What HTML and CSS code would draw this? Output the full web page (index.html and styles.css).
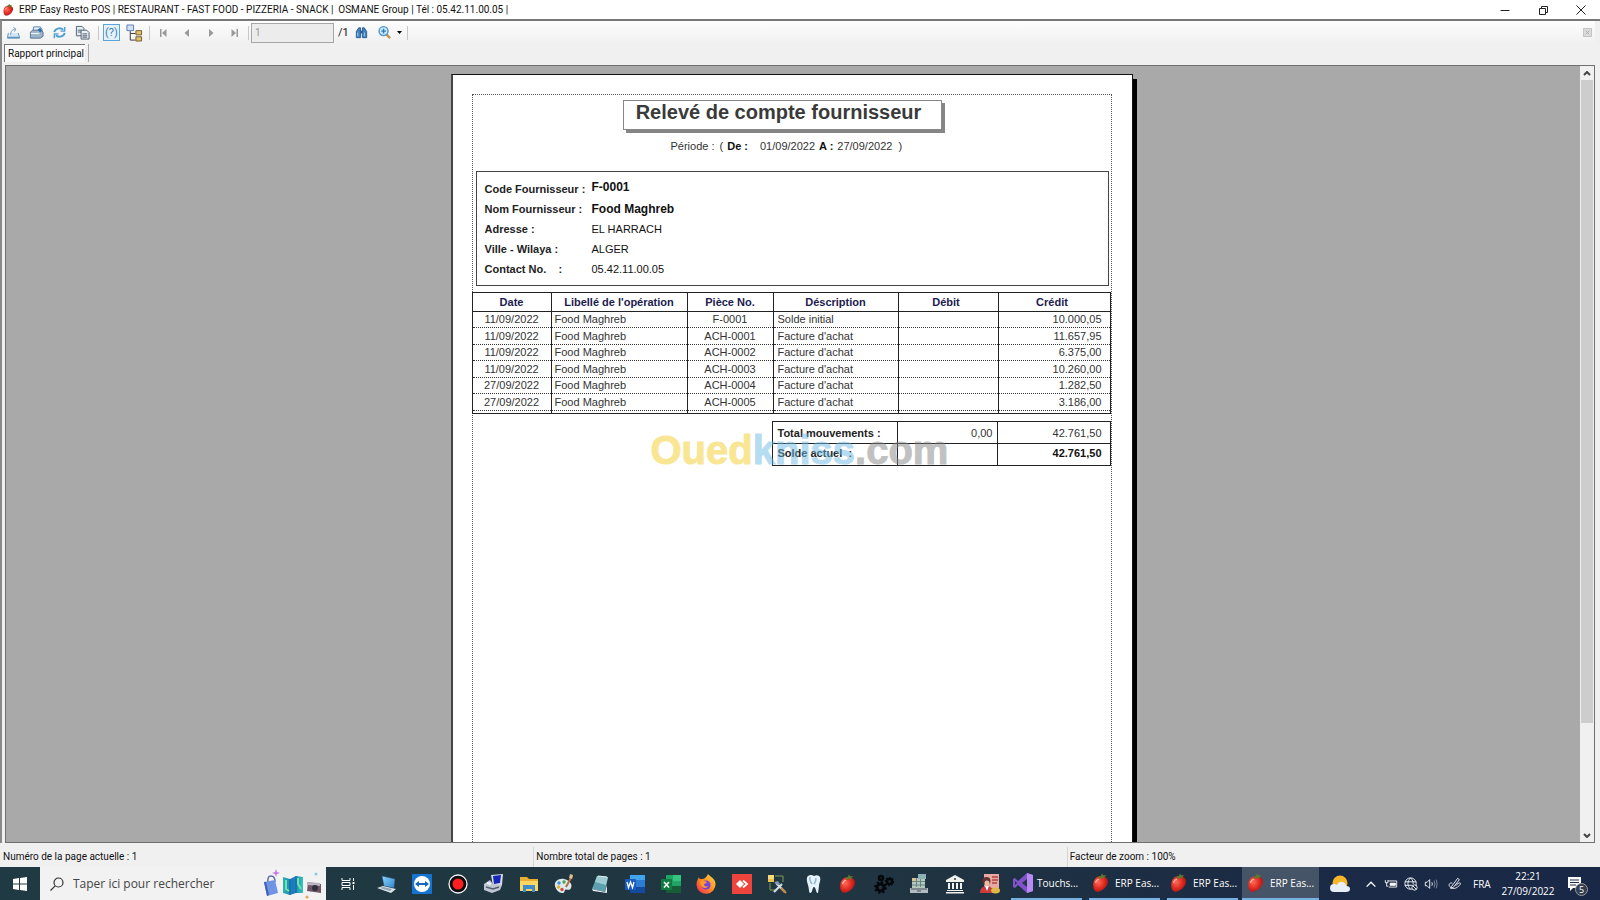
FILE: index.html
```html
<!DOCTYPE html>
<html lang="fr">
<head>
<meta charset="utf-8">
<title>ERP Easy Resto POS</title>
<link rel="stylesheet" href="styles.css">
</head>
<body>
<svg class="defs" aria-hidden="true">
  <defs>
    <radialGradient id="redFruit" cx=".35" cy=".4" r=".8"><stop offset="0" stop-color="#ff6a55"/><stop offset=".5" stop-color="#df2a22"/><stop offset="1" stop-color="#8c0d10"/></radialGradient>
    <linearGradient id="fox" x1="1" y1="0" x2="0" y2="1"><stop offset="0" stop-color="#ffe14a"/><stop offset=".5" stop-color="#ff8a1f"/><stop offset="1" stop-color="#f0245c"/></linearGradient>
    <linearGradient id="screen" x1="0" y1="0" x2="1" y2="1"><stop offset="0" stop-color="#8fd3fb"/><stop offset="1" stop-color="#2c86cf"/></linearGradient>
    <linearGradient id="mapg" x1="0" y1="0" x2="1" y2="0"><stop offset="0" stop-color="#2bb5a8"/><stop offset=".5" stop-color="#1a76c4"/><stop offset="1" stop-color="#35c7b0"/></linearGradient>
    <symbol id="berry" viewBox="0 0 22 22">
      <path d="M6 5C10 2 17 3 18.500 7.500C20 12 15 19 8.500 20.500C4 21.500 2 17 2.500 12C2.800 9 3.500 7 6 5Z" fill="url(#redFruit)"/>
      <path d="M8 4.500L11 3L12 .500L13.500 2.500L17 2.500L14.500 4.500L15 6.500L12 5L9.500 6.500Z" fill="#5d7a2c"/>
      <path d="M5 11q1-4 4-4" stroke="#ffb0a0" stroke-width="1.500" fill="none"/>
    </symbol>
  </defs>
</svg>

<main class="window">
  <header class="titlebar">
    <svg class="app-icon"><use href="#berry"/></svg>
    <h1 class="caption">ERP Easy Resto POS | RESTAURANT - FAST FOOD - PIZZERIA - SNACK |&nbsp; OSMANE Group | Tél : 05.42.11.00.05 |</h1>
    <div class="win-buttons">
      <button aria-label="Réduire"><svg viewBox="0 0 10 10"><path d="M.500 5.500h9"/></svg></button>
      <button aria-label="Restaurer"><svg viewBox="0 0 10 10"><path d="M1.500 3.500h6v6h-6zM3.500 3V1.500h6v6H8"/></svg></button>
      <button aria-label="Fermer"><svg viewBox="0 0 10 10"><path d="M.500 .500l9 9M9.500 .500l-9 9"/></svg></button>
    </div>
  </header>

  <div class="client">
    <div class="toolbar">
      <button aria-label="Exporter"><svg viewBox="0 0 16 16" fill="none" stroke="#5d93bd"><path d="M2.500 8.500L1.500 13.500H14.500L13 8.500" fill="#d3e6f4"/><path d="M1.500 13.500h13" stroke-width="2"/><path d="M5 10.500C5 6 7 5 10 4.500M8 2.500L10.500 4.500L9 7"/></svg></button>
      <button aria-label="Imprimer"><svg viewBox="0 0 16 16"><path d="M5 2h7l2 3v4H4z" fill="#e8f2fb" stroke="#5b7fa3"/><path d="M1.500 7.500L4 5.500h9l2 2v4.500l-3 2H1.500z" fill="#9db4cc" stroke="#56728f"/><path d="M2 9h9" stroke="#fff"/><path d="M9 5l3-2 2 3-2 2z" fill="#2f6ea8"/></svg></button>
      <button aria-label="Actualiser"><svg viewBox="0 0 16 16" fill="none" stroke="#4f9fd0" stroke-width="2"><path d="M2.500 7.500A5.500 4.500 0 0 1 12 5M13.500 8.500A5.500 4.500 0 0 1 4 11"/><path d="M13.500 2v4.500H9M2.500 14V9.500H7" stroke-width="1.500"/></svg></button>
      <button aria-label="Copier"><svg viewBox="0 0 16 16" stroke="#4d5f70" fill="#e9eef3"><path d="M1.500 1.500h6l2 2v8h-8z"/><path d="M3 5.500h4M3 7.500h4"/><path d="M6.500 5.500h6l2.500 2.500v7H6.500z"/><path d="M8 9.500h5M8 11.500h5M8 13h5"/></svg></button>
      <i class="sep"></i>
      <button class="toggled" aria-label="Paramètres">(?)</button>
      <button class="wide" aria-label="Arborescence"><svg viewBox="0 0 18 20"><path d="M4.500 8v9.500H10M4.500 10.500H10" fill="none" stroke="#333"/><path d="M1 1.500h7v6H1z" fill="#cfe0f7" stroke="#5c7bb0"/><path d="M10.500 7.500h6v4.500h-6zM10.500 14h6v4.500h-6z" fill="#e5c06c" stroke="#6f5a2c"/></svg></button>
      <i class="sep tight"></i>
      <button class="nav" aria-label="Première page"><svg viewBox="0 0 8 8"><path d="M1 0h1.500v8H1zM7.500 0v8L3 4z"/></svg></button>
      <button class="nav" aria-label="Page précédente"><svg viewBox="0 0 8 8"><path d="M6 0v8L1.500 4z"/></svg></button>
      <button class="nav" aria-label="Page suivante"><svg viewBox="0 0 8 8"><path d="M2 0v8l4.500-4z"/></svg></button>
      <button class="nav" aria-label="Dernière page"><svg viewBox="0 0 8 8"><path d="M.500 0v8L5 4zM5.500 0H7v8H5.500z"/></svg></button>
      <i class="sep tight"></i>
      <input class="page-input" type="text" value="1" aria-label="Page" disabled>
      <span class="page-count">/1</span>
      <button aria-label="Rechercher"><svg viewBox="0 0 16 16"><path d="M2.500 13.500V7L5 3h2v10.500zM9 13.500V3h2L13.500 7v6.500z" fill="#3f82bd" stroke="#2b5f92"/><path d="M7 6h2v3H7z" fill="#2b5f92"/><path d="M4 8v4M11 8v4" stroke="#a7d3f3"/></svg></button>
      <button aria-label="Zoom"><svg viewBox="0 0 16 16"><path d="M9.500 9.500L14 14" stroke="#c2924e" stroke-width="2.500"/><circle cx="7" cy="6.500" r="4.800" fill="#cde8fb" stroke="#4b95cf" stroke-width="1.500"/><path d="M4.500 6.500h5M7 4v5" stroke="#2f79b8" stroke-width="1.500"/></svg></button>
      <button class="caret" aria-label="Options de zoom"><svg viewBox="0 0 5 3"><path d="M0 0h5L2.500 3z"/></svg></button>
      <i class="sep"></i>
      <button class="close-view" aria-label="Fermer la vue"><svg viewBox="0 0 10 10"><path d="M.500 .500h9v9h-9z" fill="#dcdcdc" stroke="#bdbdbd"/><path d="M3 3l4 4M7 3L3 7" stroke="#aaa"/></svg></button>
    </div>

    <div class="tabs"><button class="tab">Rapport principal</button></div>

    <div class="viewer">
      <div class="canvas">
        <article class="paper">
          <div class="margins">
            <h2 class="report-title">Relevé de compte fournisseur</h2>
            <p class="period"><span class="label">Période :</span><span>(</span><b>De :</b><time class="from">01/09/2022</time><b>A :</b><time>27/09/2022</time><span class="end">)</span></p>
            <dl class="supplier">
              <dt>Code Fournisseur :</dt><dd class="strong raised">F-0001</dd>
              <dt>Nom Fournisseur :</dt><dd class="strong">Food Maghreb</dd>
              <dt>Adresse :</dt><dd>EL HARRACH</dd>
              <dt>Ville - Wilaya :</dt><dd>ALGER</dd>
              <dt>Contact No. &nbsp;&nbsp; :</dt><dd>05.42.11.00.05</dd>
            </dl>
            <table class="ledger">
              <colgroup><col class="c-date"><col class="c-label"><col class="c-ref"><col class="c-desc"><col class="c-debit"><col></colgroup>
              <thead><tr><th>Date</th><th>Libellé de l'opération</th><th>Pièce No.</th><th>Déscription</th><th>Débit</th><th>Crédit</th></tr></thead>
              <tbody>
                <tr><td>11/09/2022</td><td>Food Maghreb</td><td>F-0001</td><td>Solde initial</td><td></td><td>10.000,05</td></tr>
                <tr><td>11/09/2022</td><td>Food Maghreb</td><td>ACH-0001</td><td>Facture d'achat</td><td></td><td>11.657,95</td></tr>
                <tr><td>11/09/2022</td><td>Food Maghreb</td><td>ACH-0002</td><td>Facture d'achat</td><td></td><td>6.375,00</td></tr>
                <tr><td>11/09/2022</td><td>Food Maghreb</td><td>ACH-0003</td><td>Facture d'achat</td><td></td><td>10.260,00</td></tr>
                <tr><td>27/09/2022</td><td>Food Maghreb</td><td>ACH-0004</td><td>Facture d'achat</td><td></td><td>1.282,50</td></tr>
                <tr><td>27/09/2022</td><td>Food Maghreb</td><td>ACH-0005</td><td>Facture d'achat</td><td></td><td>3.186,00</td></tr>
              </tbody>
              <tfoot><tr><td></td><td></td><td></td><td></td><td></td><td></td></tr></tfoot>
            </table>
            <div class="summary">
              <table class="totals">
                <colgroup><col class="c-desc"><col class="c-debit"><col></colgroup>
                <tr><th>Total mouvements :</th><td>0,00</td><td>42.761,50</td></tr>
                <tr class="balance"><th>Solde actuel &nbsp;:</th><td></td><td class="strong">42.761,50</td></tr>
              </table>
              <div class="watermark"><span class="y">Oued</span><span class="b">kniss</span><span class="g">.com</span></div>
            </div>
          </div>
        </article>
      </div>
      <div class="scrollbar">
        <button aria-label="Défiler vers le haut"><svg viewBox="0 0 8 5"><path d="M1 4l3-3 3 3"/></svg></button>
        <div class="track"><div class="thumb"></div></div>
        <button aria-label="Défiler vers le bas"><svg viewBox="0 0 8 5"><path d="M1 1l3 3 3-3"/></svg></button>
      </div>
    </div>
  </div>

  <footer class="status">
    <span>Numéro de la page actuelle : 1</span><span>Nombre total de pages : 1</span><span>Facteur de zoom : 100%</span>
  </footer>
</main>

<nav class="taskbar">
  <button class="start" aria-label="Démarrer"><svg viewBox="0 0 14 14" fill="#fff"><path d="M0 2l6-1v5.500H0zM7 .900L14 0v6.500H7zM0 7.500h6V13l-6-1zM7 7.500h7V14l-7-1z"/></svg></button>
  <div class="search">
    <svg class="lens" viewBox="0 0 14 14" fill="none" stroke="#333" stroke-width="1.200"><circle cx="8.500" cy="5.500" r="4.500"/><path d="M5.200 8.800L.500 13.500"/></svg>
    <input type="text" placeholder="Taper ici pour rechercher" aria-label="Taper ici pour rechercher">
    <svg class="doodle" viewBox="0 0 60 32">
      <path d="M13 1l1 3 3 1-3 1-1 3-1-3-3-1 3-1z" fill="#c77be6"/>
      <path d="M5 15Q4 8 8 8t4 6" fill="none" stroke="#5a6ba8" stroke-width="1.500"/>
      <path d="M1 14l11-2 3 13-11 3z" fill="#6f94e6"/><path d="M1 14l3 14 2-1-3-13z" fill="#3e5fba"/>
      <path d="M20 9l7 2 6-3 7 1v16l-7 0-6 2-7-2z" fill="url(#mapg)"/><path d="M27 11v16M33 8v17" stroke="#125f8f" stroke-width="1"/><path d="M23 12v9l3 2M35 10v6l3 5" stroke="#6fe0b0" stroke-width="2" fill="none"/>
      <path d="M45 14l13 2v9l-14-2z" fill="#6b5566"/><path d="M44 14l13 1v3l-13-1z" fill="#b9b3bd"/><circle cx="52" cy="20" r="3" fill="#342e3c"/>
      <circle cx="53" cy="6" r="1.500" fill="#8bc8e8"/><circle cx="44" cy="29" r="1.500" fill="#e9a44e"/>
    </svg>
  </div>
  <div class="pinned">
    <button class="view" aria-label="Vue des tâches"><svg viewBox="0 0 20 20" fill="none" stroke="#fff"><path d="M4 4v2.500h8V4M4 16v-2.500h8V16M4 8.500h8v3H4zM15.500 4v3M15.500 11v5"/><path d="M14.500 8h2v2h-2z" fill="#fff" stroke="none"/></svg></button>
    <button aria-label="Ce PC"><svg viewBox="0 0 20 20"><path d="M5 2l13 3-1 9-10-2z" fill="url(#screen)" stroke="#26506f" stroke-width=".500"/><path d="M0 14l6-2 13 3-5 4z" fill="#dbe3e8"/><path d="M3 14l3-1 9 2-2 2z" fill="#8fa5b3"/></svg></button>
    <button aria-label="TeamViewer"><svg viewBox="0 0 20 20"><rect width="20" height="20" rx="1" fill="#1573d1"/><circle cx="10" cy="10" r="8" fill="#fff"/><path d="M3 10l4-3v2h6V7l4 3-4 3v-2H7v2z" fill="#1267bd"/></svg></button>
    <button aria-label="Enregistreur"><svg viewBox="0 0 20 20"><circle cx="10" cy="10" r="9" fill="#0d0d10" stroke="#f2f2f2" stroke-width="1.300"/><circle cx="10" cy="10" r="5.500" fill="#fb1f22"/></svg></button>
    <button aria-label="Poste et imprimante"><svg viewBox="0 0 20 20"><path d="M8 1l12-1-1 11-9 1z" fill="#d5dbe4"/><path d="M10 2l8-1-1 8-6 1z" fill="#1526b8"/><path d="M1 10l6-4 3 4 9 1-2 5-8 3-8-3z" fill="#c0c7d3"/><path d="M3 13l7 2 6-2" stroke="#545e71" stroke-width="1.500" fill="none"/><path d="M4 9l4 1" stroke="#f4f7fa" stroke-width="2"/></svg></button>
    <button aria-label="Explorateur de fichiers"><svg viewBox="0 0 20 20"><path d="M1 3h7l2 2h9v12H1z" fill="#e9ad31"/><path d="M1 7h18v10H1z" fill="#ffd765"/><path d="M4 11h12v7h-3v-3H7v3H4z" fill="#408bc9"/></svg></button>
    <button aria-label="Paint"><svg viewBox="0 0 20 20"><path d="M1 12C0 7 5 4 10 5s9 5 7 9-5 0-6 2 0 3-3 3-6-3-7-7z" fill="#dce9ef"/><circle cx="5" cy="9" r="1.700" fill="#438fd8"/><circle cx="10" cy="8" r="1.700" fill="#4ba64a"/><circle cx="4.500" cy="13" r="1.700" fill="#e0b62b"/><circle cx="8" cy="15.500" r="1.700" fill="#d94c32"/><path d="M18 2l-6 11" stroke="#b8713b" stroke-width="2"/><path d="M16 0l3 1-1 4-3-1z" fill="#e0bd90"/></svg></button>
    <button aria-label="Bloc-notes"><svg viewBox="0 0 20 20"><path d="M7 2l11 1-3 15L2 15z" fill="#5c9fae"/><path d="M7 2l11 1-2 8L5 8z" fill="#9cccd1"/><path d="M2 15l13 3 2-7v8L3 17z" fill="#e4eef0"/><path d="M8 2l9 1" stroke="#e8edef"/></svg></button>
    <button aria-label="Word"><svg viewBox="0 0 20 20"><rect x="5" y="1" width="15" height="18" rx="1" fill="#2b7cd3"/><path d="M5 1h15v5H5z" fill="#41a5ee"/><path d="M5 13h15v6H5z" fill="#124a9e"/><rect y="5" width="11" height="11" rx="1" fill="#185abd"/><path d="M2 8l1.500 5.500L5.500 8l2 5.500L9 8" stroke="#fff" stroke-width="1.300" fill="none"/></svg></button>
    <button aria-label="Excel"><svg viewBox="0 0 20 20"><rect x="5" y="1" width="15" height="18" rx="1" fill="#21a366"/><path d="M12 1h8v6h-8z" fill="#33c481"/><path d="M5 12h15v7H5z" fill="#185c37"/><rect y="5" width="11" height="11" rx="1" fill="#107c41"/><path d="M3 8l5 5.500M8 8l-5 5.500" stroke="#fff" stroke-width="1.500"/></svg></button>
    <button aria-label="Firefox"><svg viewBox="0 0 20 20"><path d="M12 0c1 2 7 4 7.500 9.500A9.500 9.500 0 0 1 .500 11C.500 7 2 5 3 3c0 2 1 2 3 2 2 0 5-2 6-5z" fill="url(#fox)"/><circle cx="10" cy="11" r="4.500" fill="#7542e5"/><path d="M4 7c3-1 6 0 7 2-2 0-3 1-3 2s2 2 4 1c-2 4-8 2-8-5z" fill="#ff9b22"/></svg></button>
    <button aria-label="AnyDesk"><svg viewBox="0 0 20 20"><path d="M0 0h20v20H0z" fill="#ef443b"/><path d="M4 10l4-4 4 4-4 4z" fill="#fff"/><path d="M11 6.500l4 3.500-4 3.500" fill="none" stroke="#fff" stroke-width="1.800"/></svg></button>
    <button aria-label="Outils de base de données"><svg viewBox="0 0 20 20"><path d="M1 1h6v7H1z" fill="#ebc34a"/><path d="M1 2h6M1 4h6" stroke="#fff1ae"/><path d="M8 2h8v6M3 9v7h5" stroke="#7f9f46" fill="none"/><path d="M7 18l8-8M9 9l9 9" stroke="#d2dce5" stroke-width="2.200"/><path d="M7 8l4-1 2 3-2 1z" fill="#7e95a8"/><path d="M14 14l5 5" stroke="#c88a3e" stroke-width="2"/></svg></button>
    <button aria-label="Cabinet dentaire"><svg viewBox="0 0 20 20"><path d="M5 2q3-2 6 0 4-2 6 1c1 4-1 6-1 9l-1 7c-2 1-2-6-4-6s-1 6-4 6c-1 0-1-5-2-8S3 4 5 2z" fill="#e6f3fa"/><path d="M7 3q-1 3 2 7M13 4q0 4-2 6" stroke="#8fb5ce" stroke-width="1.500" fill="none"/></svg></button>
    <button aria-label="Easy Resto"><svg><use href="#berry"/></svg></button>
    <button aria-label="Services"><svg viewBox="0 0 20 20" fill="none" stroke="#05080b"><circle cx="6.500" cy="13.500" r="3.500" stroke-width="3"/><circle cx="6.500" cy="13.500" r="5.500" stroke-width="2" stroke-dasharray="2 2.300"/><circle cx="15.500" cy="7.500" r="2.500" stroke-width="2.500"/><circle cx="15.500" cy="7.500" r="4" stroke-width="1.500" stroke-dasharray="1.500 1.500"/><circle cx="7" cy="4" r="2" stroke-width="2.500"/></svg></button>
    <button aria-label="Caisse"><svg viewBox="0 0 20 20"><path d="M3 4h13v10H3z" fill="#b4c9bd"/><path d="M9 0h8v5H9z" fill="#8bb1b5"/><path d="M3 7.500h13M3 11h13M7.500 4v9M11.500 5v8" stroke="#597772" stroke-width=".800"/><path d="M3 4h4v3H3z" fill="#d8c38f"/><path d="M1 14h18v5H1z" fill="#b4bcc3"/><path d="M2 15h16M8 17h4" stroke="#4c5459"/></svg></button>
    <button aria-label="Banque"><svg viewBox="0 0 20 20" fill="#f2f2ed"><path d="M10 1l9 5v2H1V6zM2 16h16v1H2zM1 18h18v1.500H1zM3 9h2v6H3zM7 9h2v6H7zM11 9h2v6h-2zM15 9h2v6h-2z"/><circle cx="10" cy="5" r="1" fill="#26404a"/></svg></button>
    <button aria-label="Personnel"><svg viewBox="0 0 20 20"><path d="M4 0h15v14H4z" fill="#e9a9a3"/><path d="M12 3h6M12 6h6M12 9h5" stroke="#b3413d" stroke-width="1.500"/><circle cx="6.500" cy="7" r="4" fill="#643032"/><circle cx="7" cy="9" r="2.500" fill="#eebca1"/><path d="M0 19c0-5 3-7 7-7s6 3 6 7z" fill="#c93c3d"/><path d="M5 12l2 5 2-5z" fill="#fff"/><ellipse cx="15.500" cy="16.500" rx="4.500" ry="3" fill="#e1b745"/></svg></button>
  </div>
  <div class="tasks">
    <button class="task"><svg viewBox="0 0 20 20"><path d="M14 0l6 2v16l-6 2L5 12l-3 3-2-1V6l2-1 3 3z" fill="#8253c8"/><path d="M14 0l6 2v16l-6 2z" fill="#b78af4"/><path d="M14 6v8l-5-4zM2 8v4l2-2z" fill="#243345"/></svg><span>Touchs...</span></button>
    <button class="task"><svg><use href="#berry"/></svg><span>ERP Eas...</span></button>
    <button class="task"><svg><use href="#berry"/></svg><span>ERP Eas...</span></button>
    <button class="task active"><svg><use href="#berry"/></svg><span>ERP Eas...</span></button>
  </div>
  <div class="tray">
    <button class="weather" aria-label="Météo"><svg viewBox="0 0 20 18"><circle cx="10" cy="8" r="7.500" fill="#f8b528"/><path d="M4 17a4 4 0 0 1 0-8q2 0 3 1 2-4 6-3 3 1 3 4 4 0 4 3t-4 3z" fill="#e8eef6"/></svg></button>
    <button aria-label="Icônes cachées"><svg class="line" viewBox="0 0 16 16"><path d="M3 11l5-5 5 5" stroke-width="1.500"/></svg></button>
    <button aria-label="Batterie"><svg class="line" viewBox="0 0 16 16"><path d="M4.500 4.500h10v7h-9M1.500 3.500v3h3v-3M3 6.500v4h2"/><path d="M7 7h6v2.500H7z" fill="#fff"/></svg></button>
    <button aria-label="Réseau"><svg class="line" viewBox="0 0 16 16"><circle cx="7.500" cy="7.500" r="6.500"/><path d="M1 5.500h13M1 9.500h9M7.500 1c-4 4-4 9 0 13M7.500 1c3 3 3 5 3 7"/><circle cx="12" cy="12" r="3" fill="#1d2b43"/><path d="M10 10l4 4"/></svg></button>
    <button aria-label="Volume"><svg class="line" viewBox="0 0 16 16"><path d="M1.500 6v4h2l3 3V3l-3 3z"/><path d="M9 6q1 2 0 4"/><path d="M11.500 4q2 4 0 8M14 3q2 5 0 10" opacity=".5"/></svg></button>
    <button class="pen" aria-label="Stylet"><svg class="line" viewBox="0 0 16 16"><path d="M4 11L11 1.500l2 1.500-7 9-3 1zM5 7C2 6 0 9 2 11s5 3 8 1 5-4 4-5-4 1-5 3"/></svg></button>
    <span class="lang">FRA</span>
    <div class="clock"><span>22:21</span><span>27/09/2022</span></div>
    <button class="notif" aria-label="Notifications"><svg viewBox="0 0 16 16"><path d="M1 1h13v11H6l-3 3v-3H1z" fill="#fff"/><path d="M3 4h9M3 6.500h9M3 9h6" stroke="#1a2844"/></svg><span class="count">5</span></button>
  </div>
</nav>
</body>
</html>
```
FILE: styles.css
```css
* { box-sizing: border-box; }
html, body { height: 100%; }
body {
  margin: 0;
  display: flex;
  flex-direction: column;
  overflow: hidden;
  background: #f0f0f0;
  color: #111;
  font: 10px/16px Roboto, "Noto Sans", sans-serif;
}
h1, h2, p, dl, dd { margin: 0; font: inherit; }
button { margin: 0; padding: 0; border: 0; background: none; font: inherit; color: inherit; }
svg { display: block; }
.defs { position: absolute; width: 0; height: 0; }

.window { flex: 1; min-height: 0; display: flex; flex-direction: column; }

/* Title bar */
.titlebar { display: flex; align-items: center; height: 19px; background: #fff; }
.app-icon { width: 13px; height: 14px; margin: 0 4px 0 2px; }
.caption { flex: 1; white-space: nowrap; }
.win-buttons { display: flex; }
.win-buttons button { width: 38px; display: grid; place-items: center; }
.win-buttons svg { width: 10px; height: 10px; fill: none; stroke: #222; }

/* Toolbar */
.client {
  flex: 1;
  min-height: 0;
  display: flex;
  flex-direction: column;
  border-top: 2px solid #777;
  border-left: 2px solid #8a8a8a;
  padding-right: 5px;
}
.toolbar { display: flex; align-items: center; height: 23px; background: linear-gradient(#fdfdfd, #f0f0f0); }
.toolbar button { width: 23px; display: grid; place-items: center; }
.toolbar svg { width: 15px; height: 15px; }
.sep { width: 1px; height: 14px; margin: 0 4px; background: #c8c8c8; }
.sep.tight { margin: 0 1px; }
.toolbar .toggled { width: 17px; height: 17px; border: 1px solid #5ba3d8; background: #e3f1fb; color: #3f7fae; font-size: 11px; line-height: 14px; }
.toolbar .wide { width: 28px; }
.toolbar .wide svg { width: 17px; height: 20px; }
.toolbar .nav { width: 24px; }
.toolbar .nav svg { width: 8px; height: 8px; fill: #999; }
.page-input { width: 83px; height: 20px; margin-left: 1px; padding: 0 3px; border: 1px solid #a6a6a6; background: #ececec; color: #999; font: inherit; }
.page-count { width: 16px; padding-left: 4px; font-size: 11px; }
.toolbar .caret { width: 7px; }
.toolbar .caret svg { width: 5px; height: 3px; }
.toolbar .close-view { margin-left: auto; width: 16px; }
.toolbar .close-view svg { width: 9px; height: 9px; }

.tabs { display: flex; height: 21px; padding-left: 2px; }
.tab {
  height: 18px;
  padding: 0 1px 0 3px;
  border: 1px solid #777;
  border-width: 1px 0 0 1px;
  background: #fafafa;
  line-height: 16px;
  box-shadow: 3px 0 0 #f0f0f0, 4px 0 0 #aaa;
}

/* Report viewer */
.viewer { flex: 1; min-height: 0; display: flex; margin-left: 3px; border: 1px solid #707070; }
.canvas { flex: 1; display: flex; justify-content: center; padding: 8px 3px 0 0; overflow: hidden; background: #a9a9a9; }
.paper {
  flex: none;
  width: 682px;
  height: 960px;
  padding: 19px 20px 19px 19px;
  border: 1px solid #111;
  border-left: 2px solid #444;
  background: #fff;
  box-shadow: 4px 5px 0 #000;
}
.margins { height: 100%; padding: 5px 0 0; border: 1px dotted #555; font: 11px/14px "Liberation Sans", Arial, sans-serif; }
.report-title {
  width: 319px;
  height: 30px;
  margin-left: 150px;
  padding-right: 7px;
  border: 1px solid #888;
  box-shadow: 3px 3px 0 #858585;
  color: #3a3a3a;
  font-size: 20px;
  font-weight: 700;
  line-height: 22px;
  text-align: center;
}
.period { display: flex; gap: 4px; margin: 9px 0 18px 198px; color: #333; }
.period .label { margin-right: 1px; }
.period b { color: #111; }
.period .from { margin-left: 8px; }
.period .end { margin-left: 2px; }
.supplier {
  display: grid;
  grid-template-columns: 107px 1fr;
  grid-auto-rows: 20px;
  align-items: center;
  height: 115px;
  margin: 0 2px 0 3px;
  padding: 7px 8px;
  border: 1px solid #444;
  white-space: nowrap;
}
.supplier dt { font-weight: 700; color: #222; }
.strong { font-weight: 700; color: #111; }
dd.strong { font-size: 12px; }
.raised { padding-bottom: 4px; }

table { border-collapse: collapse; table-layout: fixed; }
th, td { padding: 0 4px; border: 1px solid #222; white-space: nowrap; overflow: hidden; }
.ledger { width: 639px; margin: 6px 0 0 -1px; color: #333; line-height: 13px; }
.c-date { width: 79px; }
.c-label { width: 136px; }
.c-ref { width: 86px; }
.c-desc { width: 125px; }
.c-debit { width: 100px; }
.ledger th { height: 19px; color: #1b1b50; }
.ledger th:nth-child(n+5) { padding-right: 8px; }
.ledger tbody td { height: 16px; border-bottom: 1px dotted #333; }
.ledger tbody tr:nth-child(even) td { height: 17px; }
.ledger tbody tr:not(:first-child) td { border-top: 1px dotted #333; }
.ledger tfoot td { height: 3px; border-top: 1px dotted #333; line-height: 0; }
.ledger td:nth-child(odd) { text-align: center; }
.ledger td:nth-child(6) { padding-right: 8px; text-align: right; }
.ledger td:nth-child(2) { padding-left: 3px; }

.summary { position: relative; display: flex; justify-content: flex-end; margin-top: 7px; }
.totals { width: 339px; color: #333; }
.totals tr { height: 22px; }
.totals th { padding-left: 5px; text-align: left; color: #222; }
.totals td { text-align: right; }
.totals td:last-child { padding-right: 8px; }
.totals .balance > * { padding-bottom: 4px; }
/* Brand mark stamped over the report */
.watermark {
  position: absolute;
  left: 178px;
  top: 5px;
  font-size: 40px;
  font-weight: 700;
  line-height: 48px;
  opacity: .5;
  -webkit-text-stroke: 1px currentColor;
  pointer-events: none;
}
.y { color: #f4cf2c; }
.b { color: #6fbbe4; }
.g { color: #858585; }

.scrollbar { width: 14px; display: flex; flex-direction: column; background: #f0f0f0; }
.scrollbar button { height: 14px; display: grid; place-items: center; }
.scrollbar svg { width: 8px; height: 5px; fill: none; stroke: #444; stroke-width: 2; }
.track { flex: 1; padding: 0 1px; }
.thumb { height: 86%; background: #cdcdcd; }

.status { display: grid; grid-template-columns: repeat(3, 1fr); height: 24px; padding-top: 4px; }
.status span { padding-left: 2px; border-left: 1px solid #d5d5d5; line-height: 20px; }
.status span:first-child { padding-left: 3px; border: 0; }

/* Taskbar */
.taskbar { display: flex; height: 33px; background: linear-gradient(90deg, #1f3a42, #203541 55%, #1b2a45 80%, #192846); color: #fff; font-family: "Open Sans", "Noto Sans", sans-serif; }
.start { width: 40px; display: grid; place-items: center; }
.start svg { width: 14px; height: 14px; }
.search { display: flex; align-items: center; width: 286px; padding-left: 10px; background: #f2f2f2; }
.lens { width: 14px; height: 14px; margin-right: 9px; }
.search input { flex: 1; min-width: 0; padding: 0; border: 0; background: none; font: 12px/16px "Open Sans", "Noto Sans", sans-serif; }
.search input::placeholder { color: #444; opacity: 1; }
.doodle { width: 60px; height: 32px; margin-right: 3px; }
.pinned { display: flex; width: 682px; }
.pinned button { flex: 1; display: grid; place-items: center; }
.pinned .view { flex: 0 0 43px; }
.pinned svg { width: 20px; height: 20px; }
.tasks { display: flex; gap: 7px; padding-left: 3px; }
.task { width: 71px; display: flex; align-items: center; gap: 4px; padding-left: 2px; border-bottom: 2px solid #76b1e4; font-size: 10px; white-space: nowrap; }
.task svg { width: 20px; height: 20px; flex: none; }
.task.active { width: 77px; margin-left: -3px; padding-left: 4px; background: #465468; }
.tray { flex: 1; display: flex; align-items: center; }
.tray button { width: 20px; display: grid; place-items: center; }
.tray .weather { width: 42px; }
.weather svg { width: 20px; height: 18px; }
.tray .line { width: 14px; height: 14px; fill: none; stroke: #fff; }
.tray .pen { width: 27px; }
.lang { width: 27px; padding-left: 5px; font-size: 10px; }
.clock { display: flex; flex-direction: column; width: 66px; align-items: center; font-size: 10px; line-height: 15px; }
.tray .notif { position: relative; width: 28px; height: 24px; }
.notif svg { width: 16px; height: 16px; }
.count { position: absolute; right: 1px; bottom: 0; width: 13px; height: 13px; border: 1px solid #999; border-radius: 50%; background: #333e50; font-size: 9px; line-height: 11px; text-align: center; }
```
